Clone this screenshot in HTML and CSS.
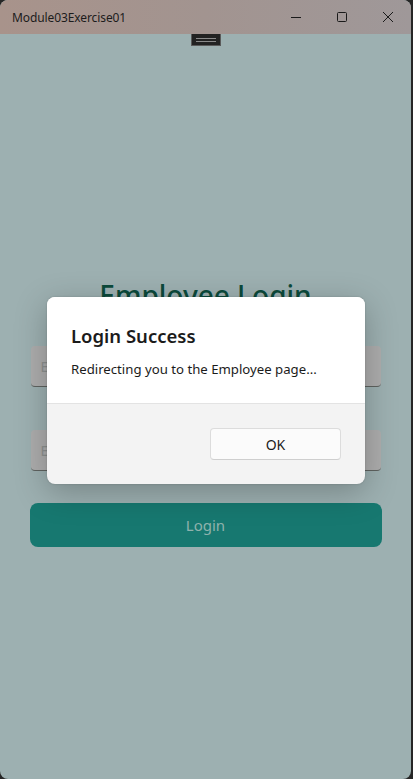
FILE: index.html
```html
<!DOCTYPE html>
<html>
<head>
<meta charset="utf-8">
<link rel="stylesheet" href="styles.css">
</head>
<body>
<div class="window">
  <div class="titlebar">
    <span class="title">Module03Exercise01</span>
    <div class="controls">
      <span class="ctl"><svg width="12" height="12" viewBox="0 0 12 12"><path d="M1 6.5h10" stroke="#1a1a1a" stroke-width="1"/></svg></span>
      <span class="ctl"><svg width="12" height="12" viewBox="0 0 12 12"><rect x="1.5" y="1.5" width="9" height="9" rx="1" fill="none" stroke="#1a1a1a" stroke-width="1"/></svg></span>
      <span class="ctl"><svg width="12" height="12" viewBox="0 0 12 12"><path d="M1 1l10 10M11 1L1 11" stroke="#1a1a1a" stroke-width="1"/></svg></span>
    </div>
  </div>
  <div class="content">
    <div class="handle"><span class="grip"></span></div>
    <h1 class="heading">Employee Login</h1>
    <div class="entry"><span class="ph">Employee ID</span></div>
    <div class="entry"><span class="ph">Employee Password</span></div>
    <div class="login-btn">Login</div>

    <div class="dialog">
      <div class="dialog-body">
        <div class="dialog-title">Login Success</div>
        <div class="dialog-text">Redirecting you to the Employee page...</div>
      </div>
      <div class="dialog-footer">
        <div class="ok-btn">OK</div>
      </div>
    </div>
  </div>
</div>
</body>
</html>
```
FILE: styles.css
```css
html, body {
  margin: 0;
  padding: 0;
}
body {
  width: 413px;
  height: 779px;
  background: #262626;
  overflow: hidden;
  font-family: "Noto Sans", "Open Sans", sans-serif;
}
.window {
  width: 411px;
  height: 779px;
  border-radius: 8px;
  overflow: hidden;
  background: #9db0b1;
  display: flex;
  flex-direction: column;
}
.titlebar {
  height: 34px;
  flex: none;
  display: flex;
  align-items: center;
  justify-content: space-between;
  background: linear-gradient(90deg, #a8938b 0%, #a29490 50%, #9f9899 100%);
}
.title {
  font-size: 12px;
  color: #1c1c1c;
  padding-left: 12px;
  letter-spacing: -0.1px;
}
.controls {
  display: flex;
  height: 34px;
}
.ctl {
  width: 46px;
  height: 34px;
  display: flex;
  align-items: center;
  justify-content: center;
}
.content {
  position: relative;
  flex: 1;
  display: flex;
  flex-direction: column;
  align-items: center;
}
.handle {
  width: 28px;
  height: 11px;
  background: #222;
  border: 1px solid #5a5a5a;
  border-top: none;
  display: flex;
  align-items: center;
  justify-content: center;
}
.grip {
  width: 20px;
  height: 2px;
  border-top: 1px solid #8a8a8a;
  border-bottom: 1px solid #8a8a8a;
}
.heading {
  margin: 231px 0 0;
  font-size: 28px;
  font-weight: 500;
  color: #0b4a3b;
  line-height: 36px;
  height: 27px;
}
.entry {
  width: 350px;
  height: 41px;
  box-sizing: border-box;
  background: #adadad;
  border-radius: 4px;
  border-bottom: 1px solid #5f6360;
  display: flex;
  align-items: center;
  padding-left: 10px;
  font-size: 14px;
  color: #8d9190;
}
.heading + .entry { margin-top: 42px; }
.entry + .entry { margin-top: 43px; }
.login-btn {
  margin-top: 32px;
  width: 352px;
  height: 44px;
  border-radius: 8px;
  background: #177870;
  color: #8fb2ad;
  font-size: 15px;
  display: flex;
  align-items: center;
  justify-content: center;
}
.dialog {
  position: absolute;
  top: 263px;
  left: 47px;
  width: 318px;
  height: 187px;
  border-radius: 8px;
  overflow: hidden;
  background: #f3f3f3;
  box-shadow: 0 8px 32px rgba(0, 0, 0, 0.25), 0 0 2px rgba(0,0,0,0.2);
  display: flex;
  flex-direction: column;
}
.dialog-body {
  height: 107px;
  background: #ffffff;
  border-bottom: 1px solid #e3e3e3;
  padding: 25px 24px 0;
  box-sizing: border-box;
}
.dialog-title {
  font-size: 18.5px;
  font-weight: 600;
  color: #1b1b1b;
  line-height: 28px;
}
.dialog-text {
  margin-top: 9px;
  font-size: 13.2px;
  color: #1b1b1b;
  line-height: 20px;
}
.dialog-footer {
  flex: 1;
  display: flex;
  justify-content: flex-end;
  align-items: flex-start;
  padding: 24px 24px 0;
}
.ok-btn {
  width: 131px;
  height: 32px;
  box-sizing: border-box;
  background: #fbfbfb;
  border: 1px solid #dcdcdc;
  border-bottom-color: #cfcfcf;
  border-radius: 4px;
  display: flex;
  align-items: center;
  justify-content: center;
  font-size: 14px;
  color: #1b1b1b;
}
```
